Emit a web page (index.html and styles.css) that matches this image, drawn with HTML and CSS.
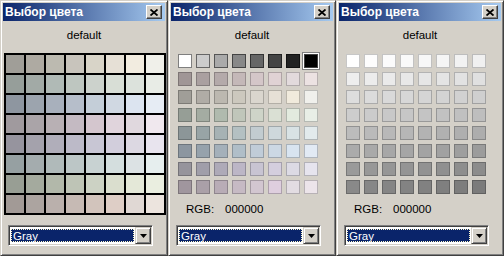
FILE: index.html
```html
<!DOCTYPE html>
<html lang="ru">
<head>
  <meta charset="UTF-8" />
  <title>Выбор цвета</title>
  <link rel="stylesheet" href="styles.css">
</head>
<body>
  <div class="desk">
    <div class="win">
      <div class="titlebar">
        <span class="title">Выбор цвета</span>
        <span class="close"><svg width="8" height="7" viewBox="0 0 8 7"><path d="M0.5 0.5 L7.5 6.5 M7.5 0.5 L0.5 6.5" stroke="#000" stroke-width="1.8" fill="none"/></svg></span>
      </div>
      <div class="caption">default</div>
      <div class="lined" id="grid1"></div>
      <div class="combo combo-a">
        <div class="sel"><span>Gray</span></div>
        <div class="drop"><svg width="7" height="4" viewBox="0 0 7 4"><polygon points="0,0 7,0 3.5,4" fill="#000"/></svg></div>
      </div>
    </div>

    <div class="win">
      <div class="titlebar">
        <span class="title">Выбор цвета</span>
        <span class="close"><svg width="8" height="7" viewBox="0 0 8 7"><path d="M0.5 0.5 L7.5 6.5 M7.5 0.5 L0.5 6.5" stroke="#000" stroke-width="1.8" fill="none"/></svg></span>
      </div>
      <div class="caption">default</div>
      <div class="swatches" id="grid2"></div>
      <div class="rgb"><span class="rgb-label">RGB:</span><span>000000</span></div>
      <div class="combo">
        <div class="sel"><span>Gray</span></div>
        <div class="drop"><svg width="7" height="4" viewBox="0 0 7 4"><polygon points="0,0 7,0 3.5,4" fill="#000"/></svg></div>
      </div>
    </div>

    <div class="win">
      <div class="titlebar">
        <span class="title">Выбор цвета</span>
        <span class="close"><svg width="8" height="7" viewBox="0 0 8 7"><path d="M0.5 0.5 L7.5 6.5 M7.5 0.5 L0.5 6.5" stroke="#000" stroke-width="1.8" fill="none"/></svg></span>
      </div>
      <div class="caption">default</div>
      <div class="swatches light" id="grid3"></div>
      <div class="rgb"><span class="rgb-label">RGB:</span><span>000000</span></div>
      <div class="combo">
        <div class="sel"><span>Gray</span></div>
        <div class="drop"><svg width="7" height="4" viewBox="0 0 7 4"><polygon points="0,0 7,0 3.5,4" fill="#000"/></svg></div>
      </div>
    </div>
  </div>

  <script>
    var pal1 = [
      "a09e98 aeaaa2 bcbab0 c8c4bc d8d4c8 e6e0d6 f2ece0 f0f0ea",
      "969e9a a2aaa6 b0bab6 bec6c0 ccd2cc d8ded6 dce2dc e8ece6",
      "8e96a0 9ca4ae a8b0bc b6beca c4ced8 d0d8e2 dce4f0 e6ecf4",
      "a09a9e aaa4a8 b8b0b4 c4bac2 d4c6ce e0d4dc e0d8de f0e8ee",
      "96949e a4a2ac b0aeba bcbac8 c8c6d4 d2cedc dcd8e2 e8e4ee",
      "96a0a2 a4acae b0baba bcc6c6 c8d2d2 d4dede dce2e4 e6eeee",
      "989e94 a4aa9e b2b8aa bec4b6 ccd2c4 dadece e4e8d8 eaeee0",
      "a29a96 aca4a0 bab0ac c6bab4 d2c4bc decec6 e0d8d4 ece4de"
    ];
    var pal2 = [
      "ffffff cccccc aaaaaa 888888 666666 444444 222222 000000",
      "a09696 aaa0a0 b4aaaa c4b8b8 d4c6c8 e0d2d4 e2dadc ece2e2",
      "a09e98 b0aca6 bcb8b0 ccc8be dad6ce e6e0d6 f0eadc f0f0ec",
      "969e96 a4aca2 b0baae c0c6ba ced4c8 dae0d4 e2eade e8eee6",
      "8c9698 98a4a6 a6b2b4 b4c0c2 c2ccd0 ced8dc d8e2e4 e2eaec",
      "8c96a0 96a2ac a4b0ba b0bec8 c0ccd8 ccd8e4 d8e4f0 e2eaf4",
      "96949c a09eaa aeaab8 bcb6c6 c8c4d2 d4cede dcdae4 e6e4ee",
      "a0969e aaa0a8 b8acb6 c6bac4 d2c6d0 decede e2dce2 ece4ea"
    ];

    function fill(id, rows, firstRowClass) {
      var box = document.getElementById(id);
      rows.forEach(function (row, r) {
        row.split(" ").forEach(function (hex, c) {
          var cell = document.createElement("div");
          cell.className = "cell";
          if (r === 0 && firstRowClass) cell.className += " " + firstRowClass;
          if (id === "grid2" && r === 0 && c === 7) cell.className += " picked";
          cell.style.background = "#" + hex;
          box.appendChild(cell);
        });
      });
    }

    // серая шкала для третьего окна
    var pal3 = [];
    for (var r = 0; r < 8; r++) {
      var row = [];
      for (var c = 0; c < 8; c++) {
        var v = Math.round(255 - (r * 8 + c) * 2.1);
        var h = v.toString(16);
        if (h.length < 2) h = "0" + h;
        row.push(h + h + h);
      }
      pal3.push(row.join(" "));
    }

    fill("grid1", pal1);
    fill("grid2", pal2, "dark");
    fill("grid3", pal3);
  </script>
</body>
</html>
```

FILE: styles.css
```css
body {
  margin: 0;
  font-family: 'Liberation Sans', Arial, sans-serif;
  font-size: 11px;
  background-color: #d4d0c8;
}
.desk {
  display: flex;
  width: 504px;
  height: 256px;
}
.win {
  width: 168px;
  height: 256px;
  box-sizing: border-box;
  background-color: #d4d0c8;
  border: 1px solid;
  border-color: #d4d0c8 #404040 #404040 #d4d0c8;
  box-shadow: inset 1px 1px #fff, inset -1px -1px #808080;
  padding: 2px;
  display: flex;
  flex-direction: column;
}
.titlebar {
  height: 18px;
  display: flex;
  align-items: center;
  justify-content: space-between;
  padding: 0 3px 0 2px;
  background: linear-gradient(to right, #0a246a, #a6caf0);
}
.title {
  color: #fff;
  font-weight: bold;
  font-size: 12px;
}
.close {
  width: 16px;
  height: 14px;
  box-sizing: border-box;
  display: flex;
  align-items: center;
  justify-content: center;
  background-color: #d4d0c8;
  border: 1px solid;
  border-color: #fff #404040 #404040 #fff;
  box-shadow: inset -1px -1px #808080;
}
.caption {
  margin-top: 7px;
  line-height: 14px;
  text-align: center;
  color: #000;
  font-size: 11.5px;
}
.lined {
  margin: 11px 0 0 1px;
  width: 162px;
  box-sizing: border-box;
  display: grid;
  grid-template-columns: repeat(8, 18px);
  grid-auto-rows: 18px;
  gap: 2px;
  padding: 2px;
  background-color: #000;
}
.swatches {
  margin: 12px 0 0 7px;
  display: grid;
  grid-template-columns: repeat(8, 14px);
  grid-auto-rows: 14px;
  gap: 4px;
}
.swatches .cell {
  box-sizing: border-box;
  border: 1px solid rgba(0, 0, 0, 0.22);
}
.swatches .cell.dark {
  border-color: rgba(0, 0, 0, 0.5);
}
.swatches .cell.picked {
  border-color: #404040;
  box-shadow: 0 0 0 1px #fff, 0 0 0 2px #808080;
}
.rgb {
  margin-top: 8px;
  line-height: 14px;
  padding-left: 15px;
  color: #000;
  font-size: 11.5px;
}
.rgb-label {
  display: inline-block;
  width: 39px;
}
.combo {
  margin: 9px 0 0 5px;
  width: 145px;
  height: 21px;
  box-sizing: border-box;
  border: 1px solid;
  border-color: #808080 #fff #fff #808080;
  box-shadow: inset 1px 1px #404040, inset -1px -1px #d4d0c8;
  padding: 2px;
  background-color: #fff;
  display: flex;
}
.combo-a {
  margin-top: 10px;
}
.sel {
  flex: 1;
  margin: 1px 1px 1px 0;
  box-sizing: border-box;
  background-color: #0a246a;
  border: 1px dotted #fff8c8;
  color: #fff;
  line-height: 13px;
  padding-left: 1px;
  font-size: 11.5px;
}
.drop {
  width: 16px;
  box-sizing: border-box;
  display: flex;
  align-items: center;
  justify-content: center;
  background-color: #d4d0c8;
  border: 1px solid;
  border-color: #d4d0c8 #404040 #404040 #d4d0c8;
  box-shadow: inset 1px 1px #fff, inset -1px -1px #808080;
  margin: -1px -1px -1px 0;
}
```
